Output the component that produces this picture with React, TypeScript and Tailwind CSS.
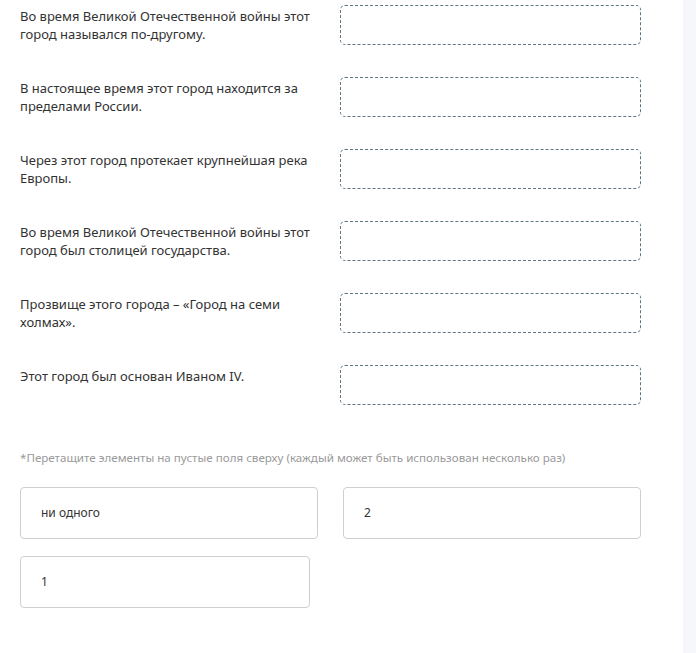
const questions = [
  'Во время Великой Отечественной войны этот город назывался по-другому.',
  'В настоящее время этот город находится за пределами России.',
  'Через этот город протекает крупнейшая река Европы.',
  'Во время Великой Отечественной войны этот город был столицей государства.',
  'Прозвище этого города – «Город на семи холмах».',
  'Этот город был основан Иваном IV.',
];

export default function App() {
  return (
    <div className="flex h-[653px] w-[696px] overflow-hidden bg-white font-['Noto_Sans',sans-serif] text-[#333]">
      <div className="w-[683px] pl-5 pt-[5px]">
        {/* Questions with drop zones */}
        <div className="flex flex-col gap-8">
          {questions.map((q) => (
            <div key={q} className="flex h-10 items-start gap-5">
              <p className="w-[300px] pt-[2px] text-[13px] leading-[18px]">{q}</p>
              <div className="h-10 w-[301px] rounded-[5px] border border-dashed border-[#5f7584]" />
            </div>
          ))}
        </div>

        <p className="mt-[45px] text-[11.6px] leading-4 text-[#9a9a9a]">
          *Перетащите элементы на пустые поля сверху (каждый может быть использован несколько раз)
        </p>

        {/* Draggable answers */}
        <div className="mt-[21px] flex w-[621px] flex-wrap gap-x-[25px] gap-y-[17px]">
          <div className="flex h-[52px] w-[298px] items-center rounded-[4px] border border-[#cfcfcf] px-5 text-[12px]">
            ни одного
          </div>
          <div className="flex h-[52px] w-[298px] items-center rounded-[4px] border border-[#cfcfcf] px-5 text-[12px]">
            2
          </div>
          <div className="flex h-[52px] w-[290px] items-center rounded-[4px] border border-[#cfcfcf] px-5 text-[12px]">
            1
          </div>
        </div>
      </div>
      <div className="flex-1 bg-[#f5f7fb]" />
    </div>
  );
}
